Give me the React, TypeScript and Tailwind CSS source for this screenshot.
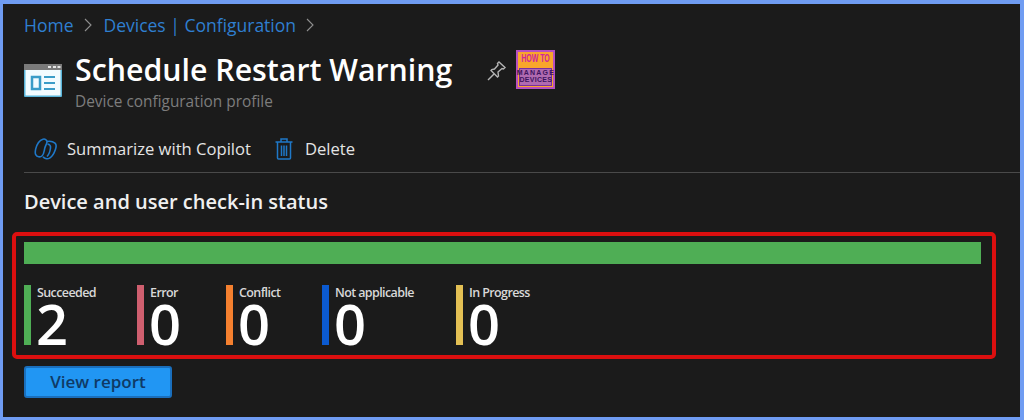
const stats = [
  { label: "Succeeded", value: "2", bar: "bg-[#4fae55]", width: "w-[113px]" },
  { label: "Error", value: "0", bar: "bg-[#cf5f6f]", width: "w-[89px]" },
  { label: "Conflict", value: "0", bar: "bg-[#f5802f]", width: "w-[96px]" },
  { label: "Not applicable", value: "0", bar: "bg-[#0b5ad0]", width: "w-[134px]" },
  { label: "In Progress", value: "0", bar: "bg-[#e3c054]", width: "w-[100px]" },
];

const Chevron = () => (
  <svg width="8" height="14" viewBox="0 0 8 14" fill="none" stroke="#8f8f8f" strokeWidth="1.1" className="shrink-0">
    <path d="M1 1l6 6-6 6" />
  </svg>
);

const BladeIcon = () => (
  <svg width="38" height="34" viewBox="0 0 38 34" className="shrink-0">
    <rect x="0" y="0" width="38" height="33" rx="1" fill="#59b4d9" />
    <rect x="0" y="0" width="38" height="6" fill="#7a7a7a" />
    <rect x="24" y="2" width="3" height="2" fill="#e6e6e6" />
    <rect x="29" y="2" width="3" height="2" fill="#e6e6e6" />
    <rect x="33.5" y="2" width="3" height="2" fill="#e6e6e6" />
    <rect x="1.5" y="6" width="35" height="25.5" fill="#f2fbff" />
    <rect x="8" y="13" width="8" height="12" fill="none" stroke="#3a9cc8" strokeWidth="2.5" />
    <path d="M20 13h11M20 19h11M20 25h11" stroke="#3a9cc8" strokeWidth="2.2" />
  </svg>
);

const CopilotIcon = () => (
  <svg width="23" height="22" viewBox="0 0 23 22" fill="none" stroke="#1f78c8" strokeWidth="1.6" className="shrink-0">
    <path d="M9 1.2c2-.5 4 .6 4 2.6 0 2-1.5 3.4-2.2 6.2-.7 3-.8 6.2-2.8 8-1.8 1.6-5 1-6.3-1.3C.5 14 2 8 4.5 4.5 5.7 2.8 7.3 1.6 9 1.2Z" />
    <path d="M13 3.5c2.5-.5 6 0 8 1.7 1.5 1.4 1.3 3.8.5 6-1 3-2.8 6.8-5.5 8.6-2.2 1.4-5.3 1-7-.9" />
    <path d="M13.5 6c2 .4 3.3 1.8 3 4-.4 3-1.5 6.5-3.5 8.5" />
  </svg>
);

const TrashIcon = () => (
  <svg width="18" height="22" viewBox="0 0 18 22" fill="none" stroke="#1f78c8" strokeWidth="1.5" className="shrink-0">
    <path d="M.5 4h17M6 4V1h6v3" />
    <path d="M2.5 4v16a1 1 0 0 0 1 1h11a1 1 0 0 0 1-1V4" />
    <path d="M6.5 7.5V18M9 7.5V18M11.5 7.5V18" />
  </svg>
);

const PinIcon = () => (
  <svg width="20" height="20" viewBox="0 0 20 20" fill="none" stroke="#b4b4b4" strokeWidth="1.4" className="shrink-0">
    <path d="M1 19l6-6" />
    <path d="M4 9.5l6.5 6.5 1-1-.5-4 4-3.5 1.5.5 1.5-1.5L12 1l-1.5 1.5.5 1.5L7.5 8 4.8 8.6Z" />
  </svg>
);

const Logo = () => (
  <div className="w-[39px] h-[39px] bg-[#f9a62b] border-[2px] border-[#b64fc0] flex flex-col items-center justify-center font-bold shrink-0 [font-family:'Liberation_Sans',sans-serif]">
    <span className="text-[#d0269c] text-[10px] leading-[10px] mb-[4px] scale-x-[0.7] whitespace-nowrap">HOW TO</span>
    <div className="flex flex-col items-center bg-[#b06ab0] border border-[#7a2ea0] text-[#3d1460] w-[33px] text-[7px] leading-[7.5px] pb-[1px] whitespace-nowrap">
      <span className="tracking-[1.2px]">MANAGE</span>
      <span className="tracking-[0.3px]">DEVICES</span>
    </div>
  </div>
);

export default function App() {
  return (
    <div className="w-[1024px] h-[420px] overflow-hidden bg-[#1b1b1b] border-t-4 border-l-[3px] border-r-4 border-b-[3px] border-[#6f9cf2] [font-family:'Open_Sans',sans-serif]">
      {/* Breadcrumb */}
      <div className="flex items-center h-[42px] pl-[21px] text-[17.5px] text-[#2f7fd0]">
        <span>Home</span>
        <span className="ml-[11px] mr-[11px]">
          <Chevron />
        </span>
        <span>Devices | Configuration</span>
        <span className="ml-[10px]">
          <Chevron />
        </span>
      </div>

      {/* Title */}
      <div className="flex items-start pl-[21px] h-[66px]">
        <div className="pt-[18px]">
          <BladeIcon />
        </div>
        <div className="ml-[13px]">
          <div className="text-[30.3px] leading-[47px] font-semibold text-white whitespace-nowrap">
            Schedule Restart Warning
          </div>
          <div className="text-[15.4px] leading-[18px] text-[#7d7d7d]">Device configuration profile</div>
        </div>
        <div className="ml-[35px] pt-[15px]">
          <PinIcon />
        </div>
        <div className="ml-[9px] pt-[4px]">
          <Logo />
        </div>
      </div>

      {/* Toolbar */}
      <div className="flex items-center h-[61px] ml-[21px] pl-[10px] pt-[14px] border-b border-[#4a4a4a] text-[16.6px] text-[#e4e4e4]">
        <CopilotIcon />
        <span className="ml-[10px]">Summarize with Copilot</span>
        <span className="ml-[24px]">
          <TrashIcon />
        </span>
        <span className="ml-[12px]">Delete</span>
      </div>

      {/* Status */}
      <div className="pl-[21px] pt-[16px] text-[20px] leading-[26px] font-semibold text-[#f0f0f0]">
        Device and user check-in status
      </div>

      <div className="ml-[9px] mt-[17px] w-[984px] h-[127px] border-4 border-[#dc0f0f] rounded-[5px] pl-2 pt-[6px]">
        <div className="w-[957px] h-[22px] bg-[#4fae55]" />
        <div className="flex mt-[21px]">
          {stats.map((s) => (
            <div key={s.label} className={`flex ${s.width}`}>
              <div className={`w-[7px] h-[60px] ${s.bar}`} />
              <div className="ml-[6px]">
                <div className="pt-[1px] text-[12.5px] leading-[14px] font-semibold text-[#d8d8d8] tracking-[-0.6px] whitespace-nowrap">{s.label}</div>
                <div className="text-[56px] leading-[46px] font-semibold text-white -ml-[1px]">{s.value}</div>
              </div>
            </div>
          ))}
        </div>
      </div>

      <button className="block ml-[21px] mt-[7px] w-[148px] h-[32px] bg-[#2196f3] border-2 border-[#1a6fbd] rounded-[3px] text-[17px] leading-[24px] font-semibold text-[#0f3a66]">
        View report
      </button>
    </div>
  );
}
